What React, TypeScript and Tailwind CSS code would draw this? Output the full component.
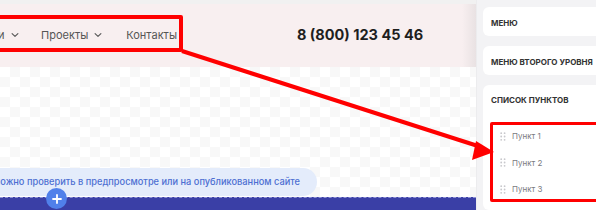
import React from "react";

function Chevron() {
  return (
    <svg width="10" height="10" viewBox="0 0 24 24" fill="none" stroke="#555" strokeWidth="2.6" strokeLinecap="round" strokeLinejoin="round">
      <path d="M5 8.5l7 7 7-7" />
    </svg>
  );
}

function Grip() {
  return (
    <svg width="6" height="9" viewBox="0 0 6 9" fill="#c8c8cc">
      <circle cx="1.2" cy="1.2" r="0.9" />
      <circle cx="4.6" cy="1.2" r="0.9" />
      <circle cx="1.2" cy="4.5" r="0.9" />
      <circle cx="4.6" cy="4.5" r="0.9" />
      <circle cx="1.2" cy="7.8" r="0.9" />
      <circle cx="4.6" cy="7.8" r="0.9" />
    </svg>
  );
}

export default function App() {
  return (
    <div className="relative w-[596px] h-[210px] overflow-hidden bg-white flex" style={{ fontFamily: "Inter, 'Noto Sans', sans-serif" }}>
      {/* Left canvas */}
      <div className="relative w-[476px] h-full flex flex-col">
        <div className="h-[4px] bg-[#f1f1f1]" />
        <div className="relative h-[63px] bg-[#f8eff0] flex items-center">
          <div className="absolute left-[-2px] top-[24px] flex items-center text-[11px] text-[#555] leading-[14px]">
            <span className="flex items-center gap-[5px]">и<Chevron /></span>
          </div>
          <div className="absolute left-[41px] top-[24px] flex items-center text-[11px] text-[#555] leading-[14px]">
            <span className="flex items-center gap-[5px]">Проекты<Chevron /></span>
            <span className="ml-[23px]">Контакты</span>
          </div>
          <div className="absolute left-[297px] top-[22px] text-[14.5px] leading-[18px] font-bold text-[#1e1e1e]">8 (800) 123 45 46</div>
          <div className="absolute right-0 top-0 h-full w-[14px] bg-gradient-to-r from-transparent to-[#e9e2e3]" />
        </div>
        <div className="relative flex-1 bg-[repeating-conic-gradient(#f8f8f8_0%_25%,#ffffff_0%_50%)] bg-[length:20px_20px] flex flex-col justify-end">
          <div className="mb-[1px] w-[317px] h-[28px] bg-[#e4ecfb] rounded-r-full flex items-center overflow-hidden">
            <span className="ml-[-7px] whitespace-nowrap text-[9.25px] font-medium text-[#4d6fd2]">можно проверить в предпросмотре или на опубликованном сайте</span>
          </div>
          <div className="h-[13px] bg-[#3a3fa6] border-t border-dashed border-[#8f93d6]" />
          <div className="absolute left-[46px] bottom-[1px] w-[21px] h-[21px] rounded-full bg-[#5080ea] flex items-center justify-center">
            <svg width="10" height="10" viewBox="0 0 10 10" stroke="#fff" strokeWidth="1.8" strokeLinecap="round">
              <path d="M5 1v8M1 5h8" />
            </svg>
          </div>
        </div>
      </div>

      {/* Right panel */}
      <div className="w-[120px] h-full bg-[#f3f3f5] border-l border-[#ececee] pl-[6px] pt-[7px] flex flex-col gap-[10px]">
        <div className="h-[29px] bg-white rounded-l-[6px] flex items-center pl-[8px] pt-[2px] text-[8px] font-bold text-[#333] whitespace-nowrap">МЕНЮ</div>
        <div className="h-[29px] bg-white rounded-l-[6px] flex items-center pl-[8px] pt-[3px] text-[8px] font-bold text-[#333] whitespace-nowrap">МЕНЮ ВТОРОГО УРОВНЯ</div>
        <div className="flex-1 bg-white rounded-l-[6px] pl-[8px] pt-[10px] whitespace-nowrap">
          <div className="text-[8px] font-bold text-[#333] h-[10px] leading-[10px]">СПИСОК ПУНКТОВ</div>
          <div className="mt-[26px] flex flex-col gap-[16.5px] pl-[9px]">
            {["Пункт 1", "Пункт 2", "Пункт 3"].map((t) => (
              <div key={t} className="flex items-center gap-[6px] h-[10px] text-[8px] text-[#7a7a80]">
                <Grip />
                <span>{t}</span>
              </div>
            ))}
          </div>
        </div>
      </div>

      {/* Annotations */}
      <div className="absolute left-[-6px] top-[15px] w-[189px] h-[37px] border-[4px] border-[#ff0000] rounded-[2px]" />
      <div className="absolute left-[490px] top-[122px] w-[120px] h-[80px] border-[3px] border-[#ff0000] rounded-[2px]" />
      <svg className="absolute left-0 top-0 pointer-events-none" width="596" height="210">
        <line x1="182" y1="51" x2="481" y2="147" stroke="#ff0000" strokeWidth="4" />
        <polygon points="494,152 476,141 472,160" fill="#ff0000" />
      </svg>
    </div>
  );
}
